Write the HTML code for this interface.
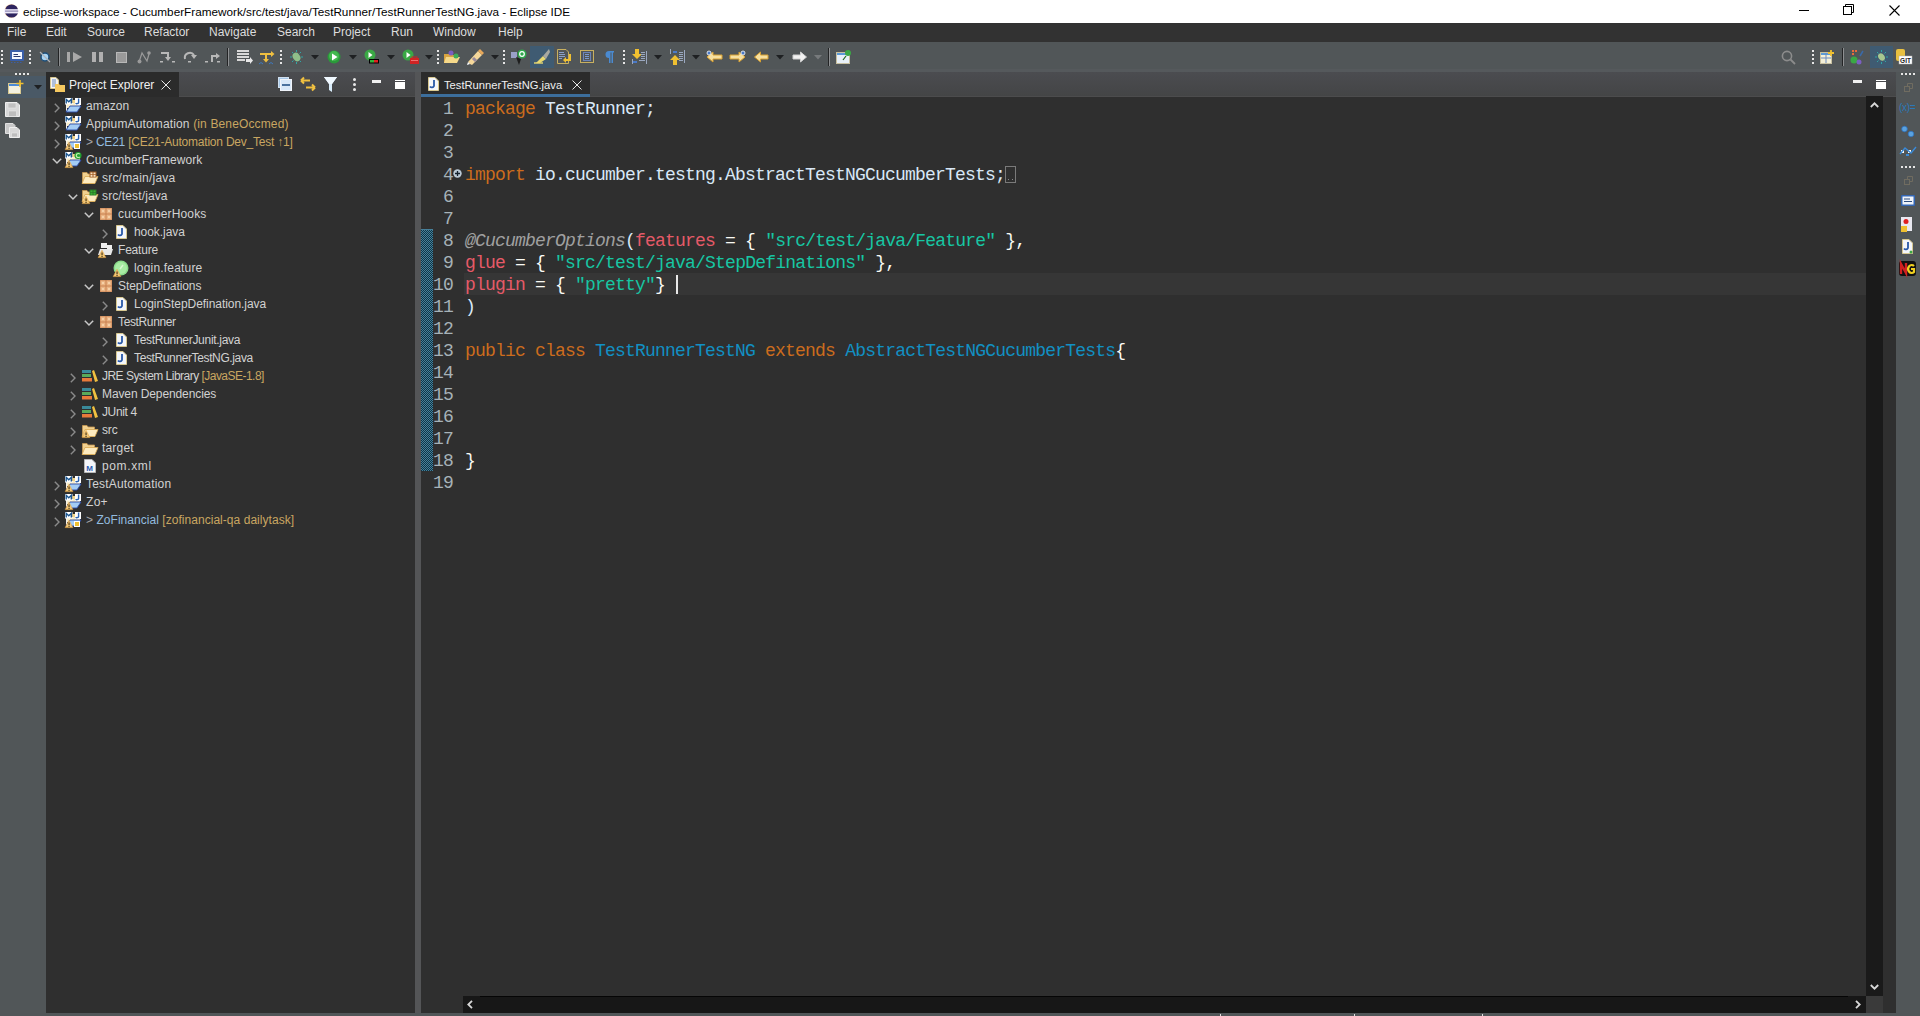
<!DOCTYPE html><html><head><meta charset="utf-8"><style>
*{margin:0;padding:0;box-sizing:border-box}
html,body{width:1920px;height:1016px;overflow:hidden;background:#515658;font-family:"Liberation Sans",sans-serif}
.a{position:absolute}
svg{position:absolute;overflow:visible}
.t{position:absolute;white-space:nowrap;font-size:12px;line-height:18px;height:18px}
.m{position:absolute;white-space:nowrap;font-size:12px;line-height:20px;color:#dddddd}
.c{position:absolute;white-space:pre;font-family:"Liberation Mono",monospace;font-size:18px;letter-spacing:-0.8px;line-height:22px;height:22px;color:#d9e8f7}
.ln{position:absolute;white-space:pre;font-family:"Liberation Mono",monospace;font-size:18px;letter-spacing:-0.8px;line-height:22px;height:22px;color:#a6b2b8;text-align:right;width:40px}
.kw{color:#cc6c1d}.st{color:#17c6a3}.an{color:#a0a0a0;font-style:italic}.at{color:#e65a68}.cl{color:#1290c3}.op{color:#f9faf4}
.dec{color:#c9a661}.repo{color:#93bbdf}
</style></head><body>
<div class="a" style="left:0;top:0;width:1920px;height:23px;background:#fff"></div>
<svg style="left:4px;top:4px" width="14" height="14" viewBox="0 0 14 14"><circle cx="7.3" cy="7" r="6.8" fill="#f4b060" opacity="0.7"/><circle cx="7.6" cy="7" r="6.6" fill="#2e2560"/><rect x="0" y="5.2" width="14" height="4.2" fill="#f4f0ff"/><rect x="1" y="6.3" width="13" height="1.8" fill="#a8a2c4"/></svg>
<div class="a" style="left:23px;top:4px;font-size:11.74px;line-height:16px;color:#000;white-space:nowrap">eclipse-workspace - CucumberFramework/src/test/java/TestRunner/TestRunnerTestNG.java - Eclipse IDE</div>
<div class="a" style="left:1799px;top:10px;width:10px;height:1px;background:#000"></div>
<svg style="left:1843px;top:4px" width="12" height="12" viewBox="0 0 12 12"><rect x="0.5" y="2.5" width="8" height="8" fill="none" stroke="#000"/><path d="M2.5 2.5V0.5H10.5V8.5H8.5" fill="none" stroke="#000"/></svg>
<svg style="left:1889px;top:5px" width="11" height="11" viewBox="0 0 11 11"><path d="M0.5 0.5L10.5 10.5M10.5 0.5L0.5 10.5" stroke="#000" stroke-width="1.1"/></svg>
<div class="a" style="left:0;top:23px;width:1920px;height:19px;background:#323232"></div>
<div class="m" style="left:7px;top:22px">File</div>
<div class="m" style="left:46px;top:22px">Edit</div>
<div class="m" style="left:87px;top:22px">Source</div>
<div class="m" style="left:144px;top:22px">Refactor</div>
<div class="m" style="left:209px;top:22px">Navigate</div>
<div class="m" style="left:277px;top:22px">Search</div>
<div class="m" style="left:333px;top:22px">Project</div>
<div class="m" style="left:391px;top:22px">Run</div>
<div class="m" style="left:433px;top:22px">Window</div>
<div class="m" style="left:498px;top:22px">Help</div>
<div class="a" style="left:0;top:42px;width:1920px;height:30px;background:#515658"></div>
<div class="a" style="left:1px;top:50px;width:2px;height:2px;background:#e6e6e6"></div><div class="a" style="left:1px;top:54px;width:2px;height:2px;background:#e6e6e6"></div><div class="a" style="left:1px;top:58px;width:2px;height:2px;background:#e6e6e6"></div><div class="a" style="left:1px;top:62px;width:2px;height:2px;background:#e6e6e6"></div>
<svg style="left:10px;top:50px" width="14" height="14" viewBox="0 0 14 14"><rect x="0" y="0" width="14" height="11" rx="1" fill="#3a5fa8"/><rect x="2" y="2" width="10" height="7" fill="#f4f8ff"/><rect x="3.5" y="4" width="4.5" height="1" fill="#2a3a70"/><rect x="3.5" y="6" width="7" height="1" fill="#2a3a70"/><path d="M1 12.5H13" stroke="#3a5fa8" stroke-dasharray="1.5 1.5"/></svg>
<div class="a" style="left:29px;top:50px;width:2px;height:2px;background:#e6e6e6"></div><div class="a" style="left:29px;top:54px;width:2px;height:2px;background:#e6e6e6"></div><div class="a" style="left:29px;top:58px;width:2px;height:2px;background:#e6e6e6"></div><div class="a" style="left:29px;top:62px;width:2px;height:2px;background:#e6e6e6"></div>
<svg style="left:39px;top:51px" width="12" height="12" viewBox="0 0 12 12"><circle cx="6" cy="6" r="4" fill="#a8d4f4" stroke="#1d4e78" stroke-width="1.5"/><path d="M1 1L11 11" stroke="#b0b4b8" stroke-width="1.2"/></svg>
<div class="a" style="left:58px;top:48px;width:1px;height:18px;background:#232425"></div><div class="a" style="left:59px;top:48px;width:1px;height:18px;background:#8e9092"></div>
<svg style="left:67px;top:52px" width="16" height="10" viewBox="0 0 16 10"><rect x="0" y="0" width="3" height="10" fill="#a8a8a8"/><path d="M6 0L15 5L6 10Z" fill="#a8a8a8"/></svg>
<svg style="left:92px;top:52px" width="12" height="10" viewBox="0 0 12 10"><rect x="0" y="0" width="4" height="10" fill="#b0b0b0"/><rect x="7" y="0" width="4" height="10" fill="#b0b0b0"/></svg>
<svg style="left:116px;top:52px" width="11" height="11" viewBox="0 0 11 11"><rect x="0.5" y="0.5" width="10" height="10" fill="#9a9a9a" stroke="#b8b8b8"/></svg>
<svg style="left:137px;top:51px" width="14" height="13" viewBox="0 0 14 13"><path d="M2 11L5 2L10 10L12 3" fill="none" stroke="#9a9a9a" stroke-width="1.2"/><circle cx="2.5" cy="10.5" r="2" fill="#9a9a9a"/><circle cx="12" cy="2" r="1.8" fill="#9a9a9a"/></svg>
<svg style="left:160px;top:51px" width="15" height="12" viewBox="0 0 15 12"><path d="M1 2H8V8" fill="none" stroke="#b8b8b8" stroke-width="2"/><path d="M5 6H11L8 10Z" fill="#b8b8b8"/><rect x="0" y="10" width="3" height="1.5" fill="#b8b8b8"/><rect x="12" y="10" width="3" height="1.5" fill="#b8b8b8"/></svg>
<svg style="left:183px;top:51px" width="15" height="12" viewBox="0 0 15 12"><path d="M2 8A5 5 0 0 1 11 4" fill="none" stroke="#b8b8b8" stroke-width="2"/><path d="M8 4H14L11 8Z" fill="#b8b8b8"/><rect x="5" y="10" width="3" height="1.5" fill="#b8b8b8"/></svg>
<svg style="left:205px;top:51px" width="16" height="12" viewBox="0 0 16 12"><path d="M7 11V5H12" fill="none" stroke="#b8b8b8" stroke-width="2"/><path d="M11 2L15 5L11 8Z" fill="#b8b8b8"/><rect x="0" y="10" width="3" height="1.5" fill="#b8b8b8"/><rect x="12" y="10" width="3" height="1.5" fill="#b8b8b8"/></svg>
<div class="a" style="left:227px;top:48px;width:1px;height:18px;background:#232425"></div><div class="a" style="left:228px;top:48px;width:1px;height:18px;background:#8e9092"></div>
<svg style="left:237px;top:50px" width="16" height="14" viewBox="0 0 16 14"><rect x="0" y="0" width="12" height="2" fill="#d8d8d8"/><rect x="0" y="3" width="12" height="2" fill="#d8d8d8"/><rect x="0" y="6" width="12" height="2" fill="#d8d8d8"/><rect x="0" y="9" width="8" height="2" fill="#d8d8d8"/><path d="M9 9H13V7L16 10.5L13 14V12H9Z" fill="#e8e8e8"/></svg>
<svg style="left:259px;top:50px" width="16" height="14" viewBox="0 0 16 14"><path d="M1 4H13" stroke="#f0c040" stroke-width="2"/><path d="M12 1L15.5 4L12 7Z" fill="#f0c040"/><path d="M7 4V10" stroke="#f0c040" stroke-width="2"/><path d="M4 9H10L7 12.5Z" fill="#f0c040"/><path d="M0 14L2 12.5L4 14M10 14L12 12.5L14 14" stroke="#3d7ac0" fill="none"/></svg>
<div class="a" style="left:280px;top:50px;width:2px;height:2px;background:#e6e6e6"></div><div class="a" style="left:280px;top:54px;width:2px;height:2px;background:#e6e6e6"></div><div class="a" style="left:280px;top:58px;width:2px;height:2px;background:#e6e6e6"></div><div class="a" style="left:280px;top:62px;width:2px;height:2px;background:#e6e6e6"></div>
<svg style="left:289px;top:50px" width="15" height="14" viewBox="0 0 15 14"><ellipse cx="7.5" cy="7" rx="3.5" ry="4.5" fill="#8fbf8a" transform="rotate(-35 7.5 7)"/><path d="M1 7H3M12 7H14M7.5 0V2M7.5 12V14M3 2L4.5 3.5M12 2L10.5 3.5M3 12L4.5 10.5M12 12L10.5 10.5" stroke="#2fa6a6" stroke-width="1"/></svg>
<svg style="left:311px;top:55px" width="8" height="5" viewBox="0 0 8 5"><path d="M0 0H8L4 4.5Z" fill="#1e2022"/></svg>
<svg style="left:327px;top:50px" width="14" height="14" viewBox="0 0 14 14"><circle cx="7" cy="7" r="6.5" fill="#2a9a3a"/><circle cx="7" cy="6" r="5" fill="#44b84f"/><path d="M5 3.5L10.5 7L5 10.5Z" fill="#fff"/></svg>
<svg style="left:349px;top:55px" width="8" height="5" viewBox="0 0 8 5"><path d="M0 0H8L4 4.5Z" fill="#1e2022"/></svg>
<svg style="left:364px;top:49px" width="16" height="15" viewBox="0 0 16 15"><circle cx="6" cy="6" r="5.5" fill="#3aa845"/><path d="M4.5 3L8.5 6L4.5 9Z" fill="#fff"/><rect x="5" y="10" width="10" height="4.5" fill="#000"/><rect x="6" y="11" width="4" height="2.5" fill="#2fb43a"/><rect x="10" y="11" width="4" height="2.5" fill="#e02020"/></svg>
<svg style="left:387px;top:55px" width="8" height="5" viewBox="0 0 8 5"><path d="M0 0H8L4 4.5Z" fill="#1e2022"/></svg>
<svg style="left:402px;top:49px" width="17" height="15" viewBox="0 0 17 15"><circle cx="6" cy="6" r="5.5" fill="#3aa845"/><path d="M4.5 3L8.5 6L4.5 9Z" fill="#fff"/><rect x="8" y="9" width="9" height="6" fill="#d02424"/><rect x="10" y="8" width="5" height="2" fill="none" stroke="#d02424"/><rect x="9" y="11" width="7" height="1" fill="#f07070"/></svg>
<svg style="left:425px;top:55px" width="8" height="5" viewBox="0 0 8 5"><path d="M0 0H8L4 4.5Z" fill="#1e2022"/></svg>
<div class="a" style="left:437px;top:50px;width:2px;height:2px;background:#e6e6e6"></div><div class="a" style="left:437px;top:54px;width:2px;height:2px;background:#e6e6e6"></div><div class="a" style="left:437px;top:58px;width:2px;height:2px;background:#e6e6e6"></div><div class="a" style="left:437px;top:62px;width:2px;height:2px;background:#e6e6e6"></div>
<svg style="left:444px;top:50px" width="17" height="14" viewBox="0 0 17 14"><path d="M0 4H5L6 5H13V13H0Z" fill="#d9a441"/><path d="M2 7H16L13 13H0Z" fill="#f5d98a"/><circle cx="7" cy="3" r="2.5" fill="#7b5fc0"/><circle cx="12" cy="6" r="2.5" fill="#3fae5a"/></svg>
<svg style="left:467px;top:49px" width="17" height="16" viewBox="0 0 17 16"><path d="M3 15L1 13L11 2L15 6L5 16Z" fill="#f5d79a"/><path d="M11 2L13 0L17 4L15 6Z" fill="#e8a85a"/><path d="M6 9L9 12" stroke="#9a8a9a" stroke-width="3"/><path d="M1 13L0 16L3 15Z" fill="#fff"/></svg>
<svg style="left:491px;top:55px" width="8" height="5" viewBox="0 0 8 5"><path d="M0 0H8L4 4.5Z" fill="#1e2022"/></svg>
<div class="a" style="left:503px;top:50px;width:2px;height:2px;background:#e6e6e6"></div><div class="a" style="left:503px;top:54px;width:2px;height:2px;background:#e6e6e6"></div><div class="a" style="left:503px;top:58px;width:2px;height:2px;background:#e6e6e6"></div><div class="a" style="left:503px;top:62px;width:2px;height:2px;background:#e6e6e6"></div>
<svg style="left:511px;top:49px" width="16" height="16" viewBox="0 0 16 16"><rect x="0" y="3" width="6" height="6" fill="#9aa0c8"/><path d="M5 8L8 16L10 10Z" fill="#1e1e1e"/><circle cx="11" cy="5" r="4.5" fill="#2ea84a"/><circle cx="11" cy="5" r="2.3" fill="none" stroke="#fff" stroke-width="1.2"/></svg>
<div class="a" style="left:530px;top:46px;width:24px;height:22px;background:#3f5b72"></div>
<svg style="left:534px;top:49px" width="16" height="15" viewBox="0 0 16 15"><path d="M2 14L9 7L12 10L6 14Z" fill="#e8d870"/><path d="M9 7L15 0L16 3L12 10Z" fill="#a8a8a0"/><path d="M0 14H9" stroke="#e8d870" stroke-width="1.4"/></svg>
<svg style="left:557px;top:49px" width="15" height="15" viewBox="0 0 15 15"><path d="M0.5 0.5H9L11.5 3V14.5H0.5Z" fill="none" stroke="#c8b060"/><path d="M2 3.5H7M2 5.5H8M2 7.5H8M2 9.5H5" stroke="#8aa0c8"/><path d="M13 5V11H8" fill="none" stroke="#f0c030" stroke-width="2"/><path d="M9 8V14L6 11Z" fill="#f0c030"/></svg>
<svg style="left:580px;top:50px" width="14" height="13" viewBox="0 0 14 13"><rect x="0.5" y="0.5" width="13" height="12" fill="none" stroke="#c8b060"/><rect x="3.5" y="2.5" width="7" height="8" fill="none" stroke="#6c84b8"/><path d="M5 4.5H9M5 6.5H9M5 8.5H9" stroke="#7a9ad0"/></svg>
<svg style="left:605px;top:51px" width="9" height="12" viewBox="0 0 9 12"><path d="M4 0H9V1.5H8V12H6.5V1.5H5.5V12H4V7A3.5 3.5 0 0 1 4 0Z" fill="#4a8ad0"/></svg>
<div class="a" style="left:623px;top:50px;width:2px;height:2px;background:#e6e6e6"></div><div class="a" style="left:623px;top:54px;width:2px;height:2px;background:#e6e6e6"></div><div class="a" style="left:623px;top:58px;width:2px;height:2px;background:#e6e6e6"></div><div class="a" style="left:623px;top:62px;width:2px;height:2px;background:#e6e6e6"></div>
<svg style="left:632px;top:49px" width="15" height="16" viewBox="0 0 15 16"><path d="M3 0H7V5H10L5 10L0 5H3Z" fill="#f0c030"/><path d="M9 3.5H13M9 5.5H13M9 7.5H13M9 9.5H13M7 11.5H13" stroke="#9aa8c0"/><path d="M14.5 2V15" stroke="#9aa8c0"/><rect x="1" y="12" width="4" height="2" fill="#4a7ac8"/><path d="M0.5 10V15" stroke="#9aa8c0"/></svg>
<svg style="left:654px;top:55px" width="8" height="5" viewBox="0 0 8 5"><path d="M0 0H8L4 4.5Z" fill="#1e2022"/></svg>
<svg style="left:670px;top:49px" width="15" height="16" viewBox="0 0 15 16"><path d="M3 16H7V11H10L5 6L0 11H3Z" fill="#f0c030"/><path d="M9 3.5H13M9 5.5H13M9 7.5H13M9 9.5H13M9 11.5H13" stroke="#9aa8c0"/><path d="M14.5 1V14" stroke="#9aa8c0"/><rect x="3" y="2" width="4" height="2" fill="#4a7ac8"/><path d="M0.5 0V5" stroke="#9aa8c0"/></svg>
<svg style="left:692px;top:55px" width="8" height="5" viewBox="0 0 8 5"><path d="M0 0H8L4 4.5Z" fill="#1e2022"/></svg>
<svg style="left:706px;top:50px" width="17" height="13" viewBox="0 0 17 13"><path d="M1 7L7 2V5H16V9H7V12Z" fill="#f7e0a0" stroke="#d8a030"/><circle cx="3" cy="3" r="2" fill="#4a7ac8" stroke="#fff" stroke-width="0.8"/></svg>
<svg style="left:729px;top:50px" width="17" height="13" viewBox="0 0 17 13"><path d="M16 7L10 2V5H1V9H10V12Z" fill="#f7e0a0" stroke="#d8a030"/><circle cx="14" cy="3" r="2" fill="#4a7ac8" stroke="#fff" stroke-width="0.8"/></svg>
<svg style="left:754px;top:51px" width="15" height="12" viewBox="0 0 15 12"><path d="M0.5 6L6.5 1V4H14V8H6.5V11Z" fill="#f7e0a0" stroke="#d8a030"/></svg>
<svg style="left:776px;top:55px" width="8" height="5" viewBox="0 0 8 5"><path d="M0 0H8L4 4.5Z" fill="#1e2022"/></svg>
<svg style="left:792px;top:51px" width="15" height="12" viewBox="0 0 15 12"><path d="M14.5 6L8.5 1V4H1V8H8.5V11Z" fill="#f2f2f2" stroke="#d0d0d0"/></svg>
<svg style="left:814px;top:55px" width="8" height="5" viewBox="0 0 8 5"><path d="M0 0H8L4 4.5Z" fill="#777a7c"/></svg>
<div class="a" style="left:828px;top:48px;width:1px;height:18px;background:#232425"></div><div class="a" style="left:829px;top:48px;width:1px;height:18px;background:#8e9092"></div>
<svg style="left:836px;top:50px" width="16" height="14" viewBox="0 0 16 14"><rect x="0.5" y="2.5" width="13" height="11" fill="#e8f0f8" stroke="#c8c0a0"/><rect x="1" y="3" width="12" height="2" fill="#5a9ad8"/><path d="M7 10L10 6" stroke="#1e6a1e" stroke-width="1.2"/><circle cx="12" cy="3" r="3" fill="#3aa845"/></svg>
<svg style="left:1781px;top:50px" width="15" height="15" viewBox="0 0 15 15"><circle cx="6" cy="6" r="4.6" fill="none" stroke="#8c8c8c" stroke-width="1.6"/><path d="M9.5 9.5L14 14" stroke="#8c8c8c" stroke-width="1.8"/></svg>
<div class="a" style="left:1812px;top:50px;width:2px;height:2px;background:#e6e6e6"></div><div class="a" style="left:1812px;top:54px;width:2px;height:2px;background:#e6e6e6"></div><div class="a" style="left:1812px;top:58px;width:2px;height:2px;background:#e6e6e6"></div><div class="a" style="left:1812px;top:62px;width:2px;height:2px;background:#e6e6e6"></div>
<svg style="left:1820px;top:50px" width="15" height="14" viewBox="0 0 15 14"><rect x="0.5" y="2.5" width="11" height="11" fill="#f4f0d8" stroke="#c8c0a0"/><rect x="1" y="3" width="10" height="2" fill="#5a9ad8"/><path d="M6 3V13M1 8H11" stroke="#6a8ac0"/><path d="M11 0V6M8 3H14" stroke="#f0c030" stroke-width="1.8"/></svg>
<div class="a" style="left:1842px;top:48px;width:1px;height:18px;background:#232425"></div><div class="a" style="left:1843px;top:48px;width:1px;height:18px;background:#8e9092"></div>
<svg style="left:1850px;top:50px" width="15" height="15" viewBox="0 0 15 15"><rect x="2" y="0" width="2" height="2" fill="#e86a3a"/><rect x="5" y="0" width="2" height="2" fill="#e86a3a"/><rect x="2" y="3" width="2" height="2" fill="#e86a3a"/><circle cx="4" cy="10" r="3.5" fill="#3aa845"/><circle cx="9" cy="12" r="2.5" fill="#7b5fc0"/><path d="M10 6L13 1" stroke="#3a6aa8" stroke-width="1.5"/></svg>
<div class="a" style="left:1870px;top:46px;width:23px;height:22px;background:#3f5b72"></div>
<svg style="left:1874px;top:50px" width="15" height="14" viewBox="0 0 15 14"><ellipse cx="7.5" cy="7" rx="3" ry="4" fill="#a8c890" transform="rotate(-35 7.5 7)"/><path d="M1 7H3M12 7H14M7.5 0V2M7.5 12V14M3 2L4.5 3.5M12 2L10.5 3.5M3 12L4.5 10.5M12 12L10.5 10.5" stroke="#2fa6a6" stroke-width="1"/></svg>
<svg style="left:1896px;top:49px" width="16" height="16" viewBox="0 0 16 16"><rect x="0" y="0" width="9" height="12" rx="2" fill="#e8c040"/><rect x="3" y="7" width="13" height="8" fill="#fff" stroke="#b0b0b0" stroke-width="0.5"/><text x="9.5" y="13.5" font-size="6.5" font-family="Liberation Sans" font-weight="bold" text-anchor="middle" fill="#222">GIT</text></svg>
<div class="a" style="left:0;top:72px;width:46px;height:944px;background:#515658"></div>
<div class="a" style="left:0;top:76px;width:46px;height:22px;background:#4a5966"></div>
<div class="a" style="left:15px;top:73px;width:2px;height:2px;background:#e6e6e6"></div><div class="a" style="left:19px;top:73px;width:2px;height:2px;background:#e6e6e6"></div><div class="a" style="left:23px;top:73px;width:2px;height:2px;background:#e6e6e6"></div><div class="a" style="left:27px;top:73px;width:2px;height:2px;background:#e6e6e6"></div>
<svg style="left:8px;top:80px" width="16" height="14" viewBox="0 0 16 14"><rect x="0.5" y="3.5" width="12" height="10" fill="#f2f0e0" stroke="#d8c890"/><rect x="1" y="4" width="11" height="2" fill="#4a8ad8"/><path d="M12 0V7M8.5 3.5H15.5" stroke="#f0c030" stroke-width="1.6"/></svg>
<svg style="left:34px;top:85px" width="8" height="5" viewBox="0 0 8 5"><path d="M0 0H8L4 4.5Z" fill="#1e2022"/></svg>
<svg style="left:5px;top:102px" width="15" height="15" viewBox="0 0 15 15"><path d="M0.5 0.5H12L14.5 3V14.5H0.5Z" fill="#d8d8d8" stroke="#eeeeee"/><rect x="3" y="1" width="8" height="5" fill="#c0c0c0" stroke="#e8e8e8" stroke-width="0.6"/><rect x="3.5" y="9" width="8" height="5.5" fill="#bdbdbd" stroke="#e8e8e8" stroke-width="0.6"/></svg>
<svg style="left:5px;top:123px" width="15" height="15" viewBox="0 0 15 15"><path d="M0.5 0.5H8L10 2.5V10.5H0.5Z" fill="#c8c8c8" stroke="#e0e0e0"/><path d="M4.5 4.5H12L14.5 7V14.5H4.5Z" fill="#d8d8d8" stroke="#eeeeee"/><rect x="6.5" y="10" width="6" height="4" fill="#bdbdbd" stroke="#e8e8e8" stroke-width="0.6"/></svg>
<div class="a" style="left:46px;top:72px;width:369px;height:941px;background:#2f2f2f"></div>
<div class="a" style="left:179px;top:72px;width:236px;height:24px;background:linear-gradient(#4b4c50,#444546)"></div><div class="a" style="left:179px;top:96px;width:236px;height:1px;background:#4c4c4d"></div>
<div class="a" style="left:46px;top:72px;width:133px;height:25px;background:#2b2b2b"></div>
<svg style="left:50px;top:77px" width="15" height="15" viewBox="0 0 15 15"><path d="M0.5 0.5H6L8.5 3V11.5H0.5Z" fill="#f4f4f4" stroke="#d8c890"/><path d="M2 3H6M2 5H6M2 7H6M2 9H5" stroke="#6a8ac0"/><path d="M5 7H9L10 8H15V15H5Z" fill="#f5c860"/></svg>
<div class="t" style="left:69px;top:76px;color:#f0f0f0">Project Explorer</div>
<svg style="left:161px;top:80px" width="10" height="10" viewBox="0 0 10 10"><path d="M0.5 0.5L9.5 9.5M9.5 0.5L0.5 9.5" stroke="#e8e8e8" stroke-width="1"/></svg>
<svg style="left:278px;top:77px" width="14" height="14" viewBox="0 0 14 14"><rect x="0.5" y="0.5" width="10" height="10" fill="#a8c8e8" stroke="#d0e0f0"/><rect x="2.5" y="2.5" width="11" height="11" fill="#d8e8f8" stroke="#f0f4fa"/><path d="M4 8H12" stroke="#1a4a80" stroke-width="1.5"/></svg>
<svg style="left:300px;top:76px" width="16" height="16" viewBox="0 0 16 16"><path d="M1 4.5H10M1 4.5L4 1.5M1 4.5L4 7.5" stroke="#f0c040" stroke-width="2" fill="none"/><path d="M15 11.5H6M15 11.5L12 8.5M15 11.5L12 14.5" stroke="#f0c040" stroke-width="2" fill="none"/></svg>
<svg style="left:324px;top:77px" width="13" height="15" viewBox="0 0 13 15"><path d="M0 0H13L8 7V15L5 13V7Z" fill="#d8ecfa"/><path d="M0 0H13L8 7H5Z" fill="#f0f8ff"/></svg>
<div class="a" style="left:353px;top:78px;width:3px;height:3px;border-radius:2px;background:#e8e8e8"></div><div class="a" style="left:353px;top:83px;width:3px;height:3px;border-radius:2px;background:#e8e8e8"></div><div class="a" style="left:353px;top:88px;width:3px;height:3px;border-radius:2px;background:#e8e8e8"></div>
<div class="a" style="left:372px;top:80px;width:9px;height:3px;background:#f0f0f0"></div>
<div class="a" style="left:395px;top:80px;width:10px;height:1px;background:#fff"></div><div class="a" style="left:395px;top:82px;width:10px;height:7px;background:#fff"></div>
<svg style="left:54px;top:103px" width="6" height="10" viewBox="0 0 6 10"><path d="M0.8 0.8L5 5L0.8 9.2" fill="none" stroke="#8a8a8a" stroke-width="1.4"/></svg>
<svg style="left:65px;top:98px" width="17" height="15" viewBox="0 0 17 15"><path d="M1 5H15V10H1Z" fill="#f8ecc8"/><path d="M1.5 5V13" stroke="#f4f0e8"/><path d="M1 14L5 8H16L12 14Z" fill="#a4ccf4" stroke="#2c4ca8" stroke-width="0.9"/><rect x="0" y="0" width="7.5" height="6.5" fill="#fff"/><path d="M1.2 5.6V1.3L3.75 3.8L6.3 1.3V5.6" fill="none" stroke="#1a5590" stroke-width="1.4"/><rect x="7.5" y="2" width="2.5" height="3" fill="#f0d488"/><rect x="10" y="0" width="6" height="7" fill="#fff"/><path d="M13.6 0.5V4.6A1.9 1.9 0 0 1 10.6 5.2" fill="none" stroke="#2a62b0" stroke-width="1.4"/></svg>
<div class="t" style="left:86px;top:97px;color:#d2d2d2;letter-spacing:0.120px">amazon</div>
<svg style="left:54px;top:121px" width="6" height="10" viewBox="0 0 6 10"><path d="M0.8 0.8L5 5L0.8 9.2" fill="none" stroke="#8a8a8a" stroke-width="1.4"/></svg>
<svg style="left:65px;top:116px" width="17" height="15" viewBox="0 0 17 15"><path d="M1 5H15V10H1Z" fill="#f8ecc8"/><path d="M1.5 5V13" stroke="#f4f0e8"/><path d="M1 14L5 8H16L12 14Z" fill="#a4ccf4" stroke="#2c4ca8" stroke-width="0.9"/><rect x="0" y="0" width="7.5" height="6.5" fill="#fff"/><path d="M1.2 5.6V1.3L3.75 3.8L6.3 1.3V5.6" fill="none" stroke="#1a5590" stroke-width="1.4"/><rect x="7.5" y="2" width="2.5" height="3" fill="#f0d488"/><rect x="10" y="0" width="6" height="7" fill="#fff"/><path d="M13.6 0.5V4.6A1.9 1.9 0 0 1 10.6 5.2" fill="none" stroke="#2a62b0" stroke-width="1.4"/></svg>
<div class="t" style="left:86px;top:115px;color:#d2d2d2;letter-spacing:0.142px">AppiumAutomation <span class="dec">(in BeneOccmed)</span></div>
<svg style="left:54px;top:139px" width="6" height="10" viewBox="0 0 6 10"><path d="M0.8 0.8L5 5L0.8 9.2" fill="none" stroke="#8a8a8a" stroke-width="1.4"/></svg>
<svg style="left:65px;top:134px" width="17" height="15" viewBox="0 0 17 15"><path d="M1 5H15V10H1Z" fill="#f8ecc8"/><path d="M1.5 5V13" stroke="#f4f0e8"/><path d="M1 14L5 8H16L12 14Z" fill="#a4ccf4" stroke="#2c4ca8" stroke-width="0.9"/><rect x="0" y="0" width="7.5" height="6.5" fill="#fff"/><path d="M1.2 5.6V1.3L3.75 3.8L6.3 1.3V5.6" fill="none" stroke="#1a5590" stroke-width="1.4"/><rect x="7.5" y="2" width="2.5" height="3" fill="#f0d488"/><rect x="10" y="0" width="6" height="7" fill="#fff"/><path d="M13.6 0.5V4.6A1.9 1.9 0 0 1 10.6 5.2" fill="none" stroke="#2a62b0" stroke-width="1.4"/></svg><svg style="left:65px;top:142px" width="8" height="8" viewBox="0 0 8 8"><path d="M4 0.3L7.8 7.6H0.2Z" fill="#f2c878" stroke="#e0a040" stroke-width="0.6"/><rect x="3.5" y="2.5" width="1.1" height="2.8" fill="#3a2a10"/><rect x="3.5" y="6" width="1.1" height="1" fill="#3a2a10"/></svg><div class="a" style="left:74px;top:143px;width:6px;height:6px;background:#f0c030;border:1px solid #fff"></div>
<div class="t" style="left:86px;top:133px;color:#d2d2d2;letter-spacing:-0.217px"><span style="color:#a8a8a8">&gt; </span><span class="repo">CE21</span> <span class="dec">[CE21-Automation Dev_Test ↑1]</span></div>
<svg style="left:52px;top:158px" width="10" height="6" viewBox="0 0 10 6"><path d="M0.8 0.8L5 5L9.2 0.8" fill="none" stroke="#c8c8c8" stroke-width="1.5"/></svg>
<svg style="left:65px;top:152px" width="17" height="15" viewBox="0 0 17 15"><path d="M1 5H15V10H1Z" fill="#f8ecc8"/><path d="M1.5 5V13" stroke="#f4f0e8"/><path d="M1 14L5 8H16L12 14Z" fill="#a4ccf4" stroke="#2c4ca8" stroke-width="0.9"/><rect x="0" y="0" width="7.5" height="6.5" fill="#fff"/><path d="M1.2 5.6V1.3L3.75 3.8L6.3 1.3V5.6" fill="none" stroke="#1a5590" stroke-width="1.4"/><rect x="7.5" y="2" width="2.5" height="3" fill="#f0d488"/><circle cx="13" cy="3.5" r="3.5" fill="#22a030"/><path d="M14.8 2.2A2 2 0 1 0 14.8 4.8" fill="none" stroke="#bff0b0" stroke-width="1.2"/></svg><svg style="left:65px;top:160px" width="8" height="8" viewBox="0 0 8 8"><path d="M4 0.3L7.8 7.6H0.2Z" fill="#f2c878" stroke="#e0a040" stroke-width="0.6"/><rect x="3.5" y="2.5" width="1.1" height="2.8" fill="#3a2a10"/><rect x="3.5" y="6" width="1.1" height="1" fill="#3a2a10"/></svg>
<div class="t" style="left:86px;top:151px;color:#d2d2d2;letter-spacing:0.056px">CucumberFramework</div>
<svg style="left:82px;top:171px" width="16" height="13" viewBox="0 0 16 13"><path d="M0.5 1.5H5L6 3H12.5V12.5H0.5Z" fill="#f0d090" stroke="#c89850" stroke-width="0.8"/><path d="M3 5.5H16L13 12.5H0Z" fill="#fdebc0" stroke="#d8a850" stroke-width="0.8"/><rect x="7.5" y="0.5" width="7" height="6" fill="#a05a20"/><rect x="8.5" y="1.5" width="2" height="1.8" fill="#f8e0c0"/><rect x="11.5" y="1.5" width="2" height="1.8" fill="#f8e0c0"/><rect x="8.5" y="4" width="2" height="1.8" fill="#f8e0c0"/><rect x="11.5" y="4" width="2" height="1.8" fill="#f8e0c0"/></svg>
<div class="t" style="left:102px;top:169px;color:#d2d2d2;letter-spacing:0.208px">src/main/java</div>
<svg style="left:68px;top:194px" width="10" height="6" viewBox="0 0 10 6"><path d="M0.8 0.8L5 5L9.2 0.8" fill="none" stroke="#c8c8c8" stroke-width="1.5"/></svg>
<svg style="left:82px;top:189px" width="16" height="13" viewBox="0 0 16 13"><path d="M0.5 1.5H5L6 3H12.5V12.5H0.5Z" fill="#f0d090" stroke="#c89850" stroke-width="0.8"/><path d="M3 5.5H16L13 12.5H0Z" fill="#fdebc0" stroke="#d8a850" stroke-width="0.8"/><rect x="7.5" y="0.5" width="7" height="6" fill="#2a7a2a"/><rect x="8.5" y="1.5" width="2" height="1.8" fill="#38b030"/><rect x="11.5" y="1.5" width="2" height="1.8" fill="#38b030"/><rect x="8.5" y="4" width="2" height="1.8" fill="#38b030"/><rect x="11.5" y="4" width="2" height="1.8" fill="#38b030"/></svg><svg style="left:82px;top:196px" width="8" height="8" viewBox="0 0 8 8"><path d="M4 0.3L7.8 7.6H0.2Z" fill="#f2c878" stroke="#e0a040" stroke-width="0.6"/><rect x="3.5" y="2.5" width="1.1" height="2.8" fill="#3a2a10"/><rect x="3.5" y="6" width="1.1" height="1" fill="#3a2a10"/></svg>
<div class="t" style="left:102px;top:187px;color:#d2d2d2;letter-spacing:0.125px">src/test/java</div>
<svg style="left:84px;top:212px" width="10" height="6" viewBox="0 0 10 6"><path d="M0.8 0.8L5 5L9.2 0.8" fill="none" stroke="#c8c8c8" stroke-width="1.5"/></svg>
<svg style="left:100px;top:208px" width="12" height="12" viewBox="0 0 12 12"><rect x="0" y="0" width="12" height="12" fill="#c88050"/><rect x="0.5" y="0.5" width="5" height="5" fill="#eab484"/><rect x="6.5" y="0.5" width="5" height="5" fill="#eab484"/><rect x="0.5" y="6.5" width="5" height="5" fill="#eab484"/><rect x="6.5" y="6.5" width="5" height="5" fill="#eab484"/><rect x="2" y="2" width="2" height="2" fill="#f6d0a8"/><rect x="8" y="2" width="2" height="2" fill="#f6d0a8"/><rect x="2" y="8" width="2" height="2" fill="#f6d0a8"/><rect x="8" y="8" width="2" height="2" fill="#f6d0a8"/></svg>
<div class="t" style="left:118px;top:205px;color:#d2d2d2;letter-spacing:0.133px">cucumberHooks</div>
<svg style="left:102px;top:229px" width="6" height="10" viewBox="0 0 6 10"><path d="M0.8 0.8L5 5L0.8 9.2" fill="none" stroke="#8a8a8a" stroke-width="1.4"/></svg>
<svg style="left:116px;top:225px" width="11" height="14" viewBox="0 0 11 14"><path d="M0.5 0.5H7L10.5 4V13.5H0.5Z" fill="#f4f6fa" stroke="#d8c890"/><path d="M6 3V9A2.3 2.3 0 0 1 2 9.5" fill="none" stroke="#2858a8" stroke-width="1.8"/></svg>
<div class="t" style="left:134px;top:223px;color:#d2d2d2;letter-spacing:-0.062px">hook.java</div>
<svg style="left:84px;top:248px" width="10" height="6" viewBox="0 0 10 6"><path d="M0.8 0.8L5 5L9.2 0.8" fill="none" stroke="#c8c8c8" stroke-width="1.5"/></svg>
<svg style="left:98px;top:243px" width="16" height="14" viewBox="0 0 16 14"><rect x="3" y="0" width="6" height="5" fill="#f0f0f0"/><rect x="9" y="2" width="5" height="5" fill="#f0f0f0"/><path d="M2 6H15L13 12H0Z" fill="#e8e8e8"/></svg><svg style="left:98px;top:250px" width="8" height="8" viewBox="0 0 8 8"><path d="M4 0.3L7.8 7.6H0.2Z" fill="#f2c878" stroke="#e0a040" stroke-width="0.6"/><rect x="3.5" y="2.5" width="1.1" height="2.8" fill="#3a2a10"/><rect x="3.5" y="6" width="1.1" height="1" fill="#3a2a10"/></svg>
<div class="t" style="left:118px;top:241px;color:#d2d2d2;letter-spacing:-0.200px">Feature</div>
<svg style="left:113px;top:260px" width="16" height="16" viewBox="0 0 16 16"><circle cx="8" cy="8" r="7.5" fill="#8cdc8c"/><circle cx="8" cy="8" r="6" fill="#a8eca4"/><path d="M7 9L10 5" stroke="#d8f8d0" stroke-width="1.5"/></svg><svg style="left:113px;top:269px" width="8" height="8" viewBox="0 0 8 8"><path d="M4 0.3L7.8 7.6H0.2Z" fill="#f2c878" stroke="#e0a040" stroke-width="0.6"/><rect x="3.5" y="2.5" width="1.1" height="2.8" fill="#3a2a10"/><rect x="3.5" y="6" width="1.1" height="1" fill="#3a2a10"/></svg>
<div class="t" style="left:134px;top:259px;color:#d2d2d2;letter-spacing:0.183px">login.feature</div>
<svg style="left:84px;top:284px" width="10" height="6" viewBox="0 0 10 6"><path d="M0.8 0.8L5 5L9.2 0.8" fill="none" stroke="#c8c8c8" stroke-width="1.5"/></svg>
<svg style="left:100px;top:280px" width="12" height="12" viewBox="0 0 12 12"><rect x="0" y="0" width="12" height="12" fill="#c88050"/><rect x="0.5" y="0.5" width="5" height="5" fill="#eab484"/><rect x="6.5" y="0.5" width="5" height="5" fill="#eab484"/><rect x="0.5" y="6.5" width="5" height="5" fill="#eab484"/><rect x="6.5" y="6.5" width="5" height="5" fill="#eab484"/><rect x="2" y="2" width="2" height="2" fill="#f6d0a8"/><rect x="8" y="2" width="2" height="2" fill="#f6d0a8"/><rect x="2" y="8" width="2" height="2" fill="#f6d0a8"/><rect x="8" y="8" width="2" height="2" fill="#f6d0a8"/></svg>
<div class="t" style="left:118px;top:277px;color:#d2d2d2;letter-spacing:-0.093px">StepDefinations</div>
<svg style="left:102px;top:301px" width="6" height="10" viewBox="0 0 6 10"><path d="M0.8 0.8L5 5L0.8 9.2" fill="none" stroke="#8a8a8a" stroke-width="1.4"/></svg>
<svg style="left:116px;top:297px" width="11" height="14" viewBox="0 0 11 14"><path d="M0.5 0.5H7L10.5 4V13.5H0.5Z" fill="#f4f6fa" stroke="#d8c890"/><path d="M6 3V9A2.3 2.3 0 0 1 2 9.5" fill="none" stroke="#2858a8" stroke-width="1.8"/></svg>
<div class="t" style="left:134px;top:295px;color:#d2d2d2;letter-spacing:-0.057px">LoginStepDefination.java</div>
<svg style="left:84px;top:320px" width="10" height="6" viewBox="0 0 10 6"><path d="M0.8 0.8L5 5L9.2 0.8" fill="none" stroke="#c8c8c8" stroke-width="1.5"/></svg>
<svg style="left:100px;top:316px" width="12" height="12" viewBox="0 0 12 12"><rect x="0" y="0" width="12" height="12" fill="#c88050"/><rect x="0.5" y="0.5" width="5" height="5" fill="#eab484"/><rect x="6.5" y="0.5" width="5" height="5" fill="#eab484"/><rect x="0.5" y="6.5" width="5" height="5" fill="#eab484"/><rect x="6.5" y="6.5" width="5" height="5" fill="#eab484"/><rect x="2" y="2" width="2" height="2" fill="#f6d0a8"/><rect x="8" y="2" width="2" height="2" fill="#f6d0a8"/><rect x="2" y="8" width="2" height="2" fill="#f6d0a8"/><rect x="8" y="8" width="2" height="2" fill="#f6d0a8"/></svg>
<div class="t" style="left:118px;top:313px;color:#d2d2d2;letter-spacing:-0.367px">TestRunner</div>
<svg style="left:102px;top:337px" width="6" height="10" viewBox="0 0 6 10"><path d="M0.8 0.8L5 5L0.8 9.2" fill="none" stroke="#8a8a8a" stroke-width="1.4"/></svg>
<svg style="left:116px;top:333px" width="11" height="14" viewBox="0 0 11 14"><path d="M0.5 0.5H7L10.5 4V13.5H0.5Z" fill="#f4f6fa" stroke="#d8c890"/><path d="M6 3V9A2.3 2.3 0 0 1 2 9.5" fill="none" stroke="#2858a8" stroke-width="1.8"/></svg>
<div class="t" style="left:134px;top:331px;color:#d2d2d2;letter-spacing:-0.295px">TestRunnerJunit.java</div>
<svg style="left:102px;top:355px" width="6" height="10" viewBox="0 0 6 10"><path d="M0.8 0.8L5 5L0.8 9.2" fill="none" stroke="#8a8a8a" stroke-width="1.4"/></svg>
<svg style="left:116px;top:351px" width="11" height="14" viewBox="0 0 11 14"><path d="M0.5 0.5H7L10.5 4V13.5H0.5Z" fill="#f4f6fa" stroke="#d8c890"/><path d="M6 3V9A2.3 2.3 0 0 1 2 9.5" fill="none" stroke="#2858a8" stroke-width="1.8"/></svg>
<div class="t" style="left:134px;top:349px;color:#d2d2d2;letter-spacing:-0.375px">TestRunnerTestNG.java</div>
<svg style="left:70px;top:373px" width="6" height="10" viewBox="0 0 6 10"><path d="M0.8 0.8L5 5L0.8 9.2" fill="none" stroke="#8a8a8a" stroke-width="1.4"/></svg>
<svg style="left:82px;top:370px" width="16" height="12" viewBox="0 0 16 12"><rect x="0" y="0" width="9" height="3" fill="#3a8a9a"/><rect x="0" y="4" width="9" height="3" fill="#5aaa5a"/><rect x="0" y="8" width="10" height="3.5" fill="#e87a3a"/><path d="M10 1L12 0L16 11L13 12Z" fill="#f0c040"/></svg>
<div class="t" style="left:102px;top:367px;color:#d2d2d2;letter-spacing:-0.523px">JRE System Library <span class="dec">[JavaSE-1.8]</span></div>
<svg style="left:70px;top:391px" width="6" height="10" viewBox="0 0 6 10"><path d="M0.8 0.8L5 5L0.8 9.2" fill="none" stroke="#8a8a8a" stroke-width="1.4"/></svg>
<svg style="left:82px;top:388px" width="16" height="12" viewBox="0 0 16 12"><rect x="0" y="0" width="9" height="3" fill="#3a8a9a"/><rect x="0" y="4" width="9" height="3" fill="#5aaa5a"/><rect x="0" y="8" width="10" height="3.5" fill="#e87a3a"/><path d="M10 1L12 0L16 11L13 12Z" fill="#f0c040"/></svg>
<div class="t" style="left:102px;top:385px;color:#d2d2d2;letter-spacing:-0.106px">Maven Dependencies</div>
<svg style="left:70px;top:409px" width="6" height="10" viewBox="0 0 6 10"><path d="M0.8 0.8L5 5L0.8 9.2" fill="none" stroke="#8a8a8a" stroke-width="1.4"/></svg>
<svg style="left:82px;top:406px" width="16" height="12" viewBox="0 0 16 12"><rect x="0" y="0" width="9" height="3" fill="#3a8a9a"/><rect x="0" y="4" width="9" height="3" fill="#5aaa5a"/><rect x="0" y="8" width="10" height="3.5" fill="#e87a3a"/><path d="M10 1L12 0L16 11L13 12Z" fill="#f0c040"/></svg>
<div class="t" style="left:102px;top:403px;color:#d2d2d2;letter-spacing:-0.383px">JUnit 4</div>
<svg style="left:70px;top:427px" width="6" height="10" viewBox="0 0 6 10"><path d="M0.8 0.8L5 5L0.8 9.2" fill="none" stroke="#8a8a8a" stroke-width="1.4"/></svg>
<svg style="left:82px;top:424px" width="16" height="13" viewBox="0 0 16 13"><path d="M0.5 1.5H5L6 3H12.5V12.5H0.5Z" fill="#f0d090" stroke="#c89850" stroke-width="0.8"/><path d="M3 5.5H16L13 12.5H0Z" fill="#fdebc0" stroke="#d8a850" stroke-width="0.8"/></svg><svg style="left:82px;top:430px" width="8" height="8" viewBox="0 0 8 8"><path d="M4 0.3L7.8 7.6H0.2Z" fill="#f2c878" stroke="#e0a040" stroke-width="0.6"/><rect x="3.5" y="2.5" width="1.1" height="2.8" fill="#3a2a10"/><rect x="3.5" y="6" width="1.1" height="1" fill="#3a2a10"/></svg>
<div class="t" style="left:102px;top:421px;color:#d2d2d2;letter-spacing:-0.150px">src</div>
<svg style="left:70px;top:445px" width="6" height="10" viewBox="0 0 6 10"><path d="M0.8 0.8L5 5L0.8 9.2" fill="none" stroke="#8a8a8a" stroke-width="1.4"/></svg>
<svg style="left:82px;top:442px" width="16" height="13" viewBox="0 0 16 13"><path d="M0.5 1.5H5L6 3H12.5V12.5H0.5Z" fill="#f0d090" stroke="#c89850" stroke-width="0.8"/><path d="M3 5.5H16L13 12.5H0Z" fill="#fdebc0" stroke="#d8a850" stroke-width="0.8"/></svg>
<div class="t" style="left:102px;top:439px;color:#d2d2d2;letter-spacing:0.180px">target</div>
<svg style="left:84px;top:459px" width="12" height="14" viewBox="0 0 12 14"><path d="M0.5 0.5H8L11.5 4V13.5H0.5Z" fill="#f4f6fa" stroke="#b8b8b8"/><text x="5.5" y="12" font-size="8" font-weight="bold" font-family="Liberation Sans" text-anchor="middle" fill="#2a5ab0">M</text></svg>
<div class="t" style="left:102px;top:457px;color:#d2d2d2;letter-spacing:0.617px">pom.xml</div>
<svg style="left:54px;top:481px" width="6" height="10" viewBox="0 0 6 10"><path d="M0.8 0.8L5 5L0.8 9.2" fill="none" stroke="#8a8a8a" stroke-width="1.4"/></svg>
<svg style="left:65px;top:476px" width="17" height="15" viewBox="0 0 17 15"><path d="M1 5H15V10H1Z" fill="#f8ecc8"/><path d="M1.5 5V13" stroke="#f4f0e8"/><path d="M1 14L5 8H16L12 14Z" fill="#a4ccf4" stroke="#2c4ca8" stroke-width="0.9"/><rect x="0" y="0" width="7.5" height="6.5" fill="#fff"/><path d="M1.2 5.6V1.3L3.75 3.8L6.3 1.3V5.6" fill="none" stroke="#1a5590" stroke-width="1.4"/><rect x="7.5" y="2" width="2.5" height="3" fill="#f0d488"/><rect x="10" y="0" width="6" height="7" fill="#fff"/><path d="M13.6 0.5V4.6A1.9 1.9 0 0 1 10.6 5.2" fill="none" stroke="#2a62b0" stroke-width="1.4"/></svg><svg style="left:65px;top:484px" width="8" height="8" viewBox="0 0 8 8"><path d="M4 0.3L7.8 7.6H0.2Z" fill="#f2c878" stroke="#e0a040" stroke-width="0.6"/><rect x="3.5" y="2.5" width="1.1" height="2.8" fill="#3a2a10"/><rect x="3.5" y="6" width="1.1" height="1" fill="#3a2a10"/></svg>
<div class="t" style="left:86px;top:475px;color:#d2d2d2;letter-spacing:0.185px">TestAutomation</div>
<svg style="left:54px;top:499px" width="6" height="10" viewBox="0 0 6 10"><path d="M0.8 0.8L5 5L0.8 9.2" fill="none" stroke="#8a8a8a" stroke-width="1.4"/></svg>
<svg style="left:65px;top:494px" width="17" height="15" viewBox="0 0 17 15"><path d="M1 5H15V10H1Z" fill="#f8ecc8"/><path d="M1.5 5V13" stroke="#f4f0e8"/><path d="M1 14L5 8H16L12 14Z" fill="#a4ccf4" stroke="#2c4ca8" stroke-width="0.9"/><rect x="0" y="0" width="7.5" height="6.5" fill="#fff"/><path d="M1.2 5.6V1.3L3.75 3.8L6.3 1.3V5.6" fill="none" stroke="#1a5590" stroke-width="1.4"/><rect x="7.5" y="2" width="2.5" height="3" fill="#f0d488"/><rect x="10" y="0" width="6" height="7" fill="#fff"/><path d="M13.6 0.5V4.6A1.9 1.9 0 0 1 10.6 5.2" fill="none" stroke="#2a62b0" stroke-width="1.4"/></svg><svg style="left:65px;top:502px" width="8" height="8" viewBox="0 0 8 8"><path d="M4 0.3L7.8 7.6H0.2Z" fill="#f2c878" stroke="#e0a040" stroke-width="0.6"/><rect x="3.5" y="2.5" width="1.1" height="2.8" fill="#3a2a10"/><rect x="3.5" y="6" width="1.1" height="1" fill="#3a2a10"/></svg>
<div class="t" style="left:86px;top:493px;color:#d2d2d2;letter-spacing:0.300px">Zo+</div>
<svg style="left:54px;top:517px" width="6" height="10" viewBox="0 0 6 10"><path d="M0.8 0.8L5 5L0.8 9.2" fill="none" stroke="#8a8a8a" stroke-width="1.4"/></svg>
<svg style="left:65px;top:512px" width="17" height="15" viewBox="0 0 17 15"><path d="M1 5H15V10H1Z" fill="#f8ecc8"/><path d="M1.5 5V13" stroke="#f4f0e8"/><path d="M1 14L5 8H16L12 14Z" fill="#a4ccf4" stroke="#2c4ca8" stroke-width="0.9"/><rect x="0" y="0" width="7.5" height="6.5" fill="#fff"/><path d="M1.2 5.6V1.3L3.75 3.8L6.3 1.3V5.6" fill="none" stroke="#1a5590" stroke-width="1.4"/><rect x="7.5" y="2" width="2.5" height="3" fill="#f0d488"/><rect x="10" y="0" width="6" height="7" fill="#fff"/><path d="M13.6 0.5V4.6A1.9 1.9 0 0 1 10.6 5.2" fill="none" stroke="#2a62b0" stroke-width="1.4"/></svg><svg style="left:65px;top:520px" width="8" height="8" viewBox="0 0 8 8"><path d="M4 0.3L7.8 7.6H0.2Z" fill="#f2c878" stroke="#e0a040" stroke-width="0.6"/><rect x="3.5" y="2.5" width="1.1" height="2.8" fill="#3a2a10"/><rect x="3.5" y="6" width="1.1" height="1" fill="#3a2a10"/></svg><div class="a" style="left:74px;top:521px;width:6px;height:6px;background:#f0c030;border:1px solid #fff"></div>
<div class="t" style="left:86px;top:511px;color:#d2d2d2;letter-spacing:0.041px"><span style="color:#a8a8a8">&gt; </span><span class="repo">ZoFinancial</span> <span class="dec">[zofinancial-qa dailytask]</span></div>
<div class="a" style="left:415px;top:72px;width:6px;height:941px;background:#545557"></div>
<div class="a" style="left:421px;top:72px;width:1475px;height:941px;background:#2f2f2f"></div>
<div class="a" style="left:590px;top:72px;width:1306px;height:24px;background:linear-gradient(#4b4c50,#444546)"></div><div class="a" style="left:590px;top:96px;width:1306px;height:1px;background:#4c4c4d"></div>
<div class="a" style="left:421px;top:72px;width:169px;height:22px;background:#2b2b2b"></div>
<div class="a" style="left:421px;top:94px;width:169px;height:3px;background:#3c6e9c"></div>
<svg style="left:428px;top:77px" width="11" height="14" viewBox="0 0 11 14"><path d="M0.5 0.5H7L10.5 4V13.5H0.5Z" fill="#f4f6fa" stroke="#d8c890"/><path d="M6 3V9A2.3 2.3 0 0 1 2 9.5" fill="none" stroke="#2858a8" stroke-width="1.8"/></svg>
<div class="t" style="left:444px;top:76px;color:#f0f0f0;font-size:11.2px">TestRunnerTestNG.java</div>
<svg style="left:572px;top:80px" width="10" height="10" viewBox="0 0 10 10"><path d="M0.5 0.5L9.5 9.5M9.5 0.5L0.5 9.5" stroke="#e8e8e8" stroke-width="1"/></svg>
<div class="a" style="left:1853px;top:80px;width:9px;height:3px;background:#f0f0f0"></div>
<div class="a" style="left:1876px;top:80px;width:10px;height:1px;background:#fff"></div><div class="a" style="left:1876px;top:82px;width:10px;height:7px;background:#fff"></div>
<div class="a" style="left:421px;top:229px;width:12px;height:242px;background:repeating-conic-gradient(#47809a 0 25%, #0e3546 0 50%) 0 0/2px 2px;border-top:1px solid #47809a"></div>
<div class="a" style="left:0;top:69px;width:1920px;height:3px;background:#55595c"></div>
<div class="a" style="left:464px;top:273px;width:1402px;height:22px;background:#363636"></div>
<div class="ln" style="left:413px;top:98px">1</div>
<div class="c" style="left:465px;top:98px"><span class="kw">package</span> TestRunner;</div>
<div class="ln" style="left:413px;top:120px">2</div>
<div class="c" style="left:465px;top:120px"></div>
<div class="ln" style="left:413px;top:142px">3</div>
<div class="c" style="left:465px;top:142px"></div>
<div class="ln" style="left:413px;top:164px">4</div>
<div class="c" style="left:465px;top:164px"><span class="kw">import</span> io.cucumber.testng.AbstractTestNGCucumberTests;</div>
<div class="ln" style="left:413px;top:186px">6</div>
<div class="c" style="left:465px;top:186px"></div>
<div class="ln" style="left:413px;top:208px">7</div>
<div class="c" style="left:465px;top:208px"></div>
<div class="ln" style="left:413px;top:230px">8</div>
<div class="c" style="left:465px;top:230px"><span class="an">@CucumberOptions</span>(<span class="at">features</span> <span class="op">=</span> <span class="op">{</span> <span class="st">"src/test/java/Feature"</span> <span class="op">},</span></div>
<div class="ln" style="left:413px;top:252px">9</div>
<div class="c" style="left:465px;top:252px"><span class="at">glue</span> <span class="op">=</span> <span class="op">{</span> <span class="st">"src/test/java/StepDefinations"</span> <span class="op">},</span></div>
<div class="ln" style="left:413px;top:274px">10</div>
<div class="c" style="left:465px;top:274px"><span class="at">plugin</span> <span class="op">=</span> <span class="op">{</span> <span class="st">"pretty"</span><span class="op">}</span> </div>
<div class="ln" style="left:413px;top:296px">11</div>
<div class="c" style="left:465px;top:296px">)</div>
<div class="ln" style="left:413px;top:318px">12</div>
<div class="c" style="left:465px;top:318px"></div>
<div class="ln" style="left:413px;top:340px">13</div>
<div class="c" style="left:465px;top:340px"><span class="kw">public</span> <span class="kw">class</span> <span class="cl">TestRunnerTestNG</span> <span class="kw">extends</span> <span class="cl">AbstractTestNGCucumberTests</span><span class="op">{</span></div>
<div class="ln" style="left:413px;top:362px">14</div>
<div class="c" style="left:465px;top:362px"></div>
<div class="ln" style="left:413px;top:384px">15</div>
<div class="c" style="left:465px;top:384px"></div>
<div class="ln" style="left:413px;top:406px">16</div>
<div class="c" style="left:465px;top:406px"></div>
<div class="ln" style="left:413px;top:428px">17</div>
<div class="c" style="left:465px;top:428px"></div>
<div class="ln" style="left:413px;top:450px">18</div>
<div class="c" style="left:465px;top:450px"><span class="op">}</span></div>
<div class="ln" style="left:413px;top:472px">19</div>
<div class="c" style="left:465px;top:472px"></div>
<svg style="left:453px;top:169px" width="9" height="9" viewBox="0 0 9 9"><circle cx="4.5" cy="4.5" r="4.2" fill="#bccad6"/><path d="M2 4.5H7M4.5 2V7" stroke="#15202a" stroke-width="1.3"/></svg>
<div class="a" style="left:1005px;top:166px;width:11px;height:17px;border:1px solid #7a7a7a"></div><div class="a" style="left:1008px;top:179px;width:1px;height:1px;background:#888"></div><div class="a" style="left:1012px;top:179px;width:1px;height:1px;background:#888"></div>
<div class="a" style="left:676px;top:275px;width:2px;height:19px;background:#e8e8e8"></div>
<div class="a" style="left:1866px;top:96px;width:17px;height:900px;background:#1a1a1a"></div>
<svg style="left:1870px;top:102px" width="9" height="6" viewBox="0 0 9 6"><path d="M0.8 5L4.5 1.3L8.2 5" fill="none" stroke="#d8d8d8" stroke-width="1.8"/></svg>
<svg style="left:1870px;top:984px" width="9" height="6" viewBox="0 0 9 6"><path d="M0.8 1L4.5 4.7L8.2 1" fill="none" stroke="#d8d8d8" stroke-width="1.8"/></svg>
<div class="a" style="left:1866px;top:996px;width:17px;height:17px;background:#3a3a3a"></div>
<div class="a" style="left:463px;top:996px;width:1403px;height:17px;background:#171717"></div>
<div class="a" style="left:480px;top:996px;width:1368px;height:1px;background:#050505"></div>
<svg style="left:467px;top:1000px" width="6" height="9" viewBox="0 0 6 9"><path d="M5 0.8L1.3 4.5L5 8.2" fill="none" stroke="#d8d8d8" stroke-width="1.8"/></svg>
<svg style="left:1855px;top:1000px" width="6" height="9" viewBox="0 0 6 9"><path d="M1 0.8L4.7 4.5L1 8.2" fill="none" stroke="#d8d8d8" stroke-width="1.8"/></svg>
<div class="a" style="left:1896px;top:72px;width:24px;height:944px;background:#515658"></div>
<div class="a" style="left:1901px;top:73px;width:2px;height:2px;background:#e6e6e6"></div><div class="a" style="left:1905px;top:73px;width:2px;height:2px;background:#e6e6e6"></div><div class="a" style="left:1909px;top:73px;width:2px;height:2px;background:#e6e6e6"></div><div class="a" style="left:1913px;top:73px;width:2px;height:2px;background:#e6e6e6"></div>
<svg style="left:1904px;top:83px" width="9" height="9" viewBox="0 0 9 9"><rect x="0.5" y="3.5" width="5" height="5" fill="none" stroke="#706c60"/><path d="M3.5 3.5V0.5H8.5V5.5H5.5" fill="none" stroke="#706c60"/></svg>
<div class="a" style="left:1899px;top:101px;font-family:'Liberation Sans';font-size:10px;line-height:14px;color:#2a78b8;letter-spacing:-0.3px">(x)=</div>
<svg style="left:1901px;top:126px" width="14" height="12" viewBox="0 0 14 12"><circle cx="3.5" cy="3" r="2.8" fill="#5aa2e0" stroke="#2a70c0" stroke-width="0.7"/><circle cx="10" cy="8" r="2.8" fill="#5aa2e0" stroke="#2a70c0" stroke-width="0.7"/></svg>
<svg style="left:1900px;top:145px" width="16" height="12" viewBox="0 0 16 12"><rect x="1" y="5" width="3" height="3" fill="#fff"/><rect x="8" y="5" width="3" height="3" fill="#fff"/><path d="M0 9L5 3L11 8L16 2" fill="none" stroke="#3a8ad8" stroke-width="1.4"/><rect x="6" y="9" width="3" height="2" fill="#3a8ad8"/></svg>
<div class="a" style="left:1901px;top:166px;width:2px;height:2px;background:#e6e6e6"></div><div class="a" style="left:1905px;top:166px;width:2px;height:2px;background:#e6e6e6"></div><div class="a" style="left:1909px;top:166px;width:2px;height:2px;background:#e6e6e6"></div><div class="a" style="left:1913px;top:166px;width:2px;height:2px;background:#e6e6e6"></div>
<svg style="left:1904px;top:176px" width="9" height="9" viewBox="0 0 9 9"><rect x="0.5" y="3.5" width="5" height="5" fill="none" stroke="#706c60"/><path d="M3.5 3.5V0.5H8.5V5.5H5.5" fill="none" stroke="#706c60"/></svg>
<svg style="left:1901px;top:195px" width="14" height="12" viewBox="0 0 14 12"><rect x="0" y="0" width="14" height="11" rx="1" fill="#3467b5"/><rect x="1.5" y="1.5" width="11" height="8" fill="#f0f4fa"/><path d="M3 4H9M3 6.5H11" stroke="#2c4d80"/></svg>
<svg style="left:1900px;top:217px" width="16" height="16" viewBox="0 0 16 16"><rect x="1" y="0" width="11" height="14" fill="#e8e8f0"/><circle cx="6" cy="4.5" r="2.5" fill="#e02020"/><rect x="1" y="9" width="6" height="6" fill="#f0c030"/></svg>
<svg style="left:1902px;top:239px" width="11" height="15" viewBox="0 0 11 15"><path d="M0.5 0.5H7L10.5 4V14.5H0.5Z" fill="#f4f6fa" stroke="#d8c890"/><path d="M6 3V9A2.3 2.3 0 0 1 2 9.5" fill="none" stroke="#2858a8" stroke-width="1.8"/><circle cx="9" cy="13" r="1.5" fill="#3aa845"/></svg>
<svg style="left:1899px;top:261px" width="17" height="15" viewBox="0 0 17 15"><rect x="0" y="0" width="17" height="15" rx="3" fill="#111"/><path d="M2 13V3L7 12V2" stroke="#d02020" stroke-width="2.4" fill="none"/><path d="M15 5A3.5 4 0 1 0 15 11V8H12" stroke="#f0d020" stroke-width="2.2" fill="none"/></svg>
<div class="a" style="left:1220px;top:1014px;width:1px;height:2px;background:#e0e0e0"></div>
<div class="a" style="left:1354px;top:1014px;width:1px;height:2px;background:#e0e0e0"></div>
<div class="a" style="left:1482px;top:1014px;width:1px;height:2px;background:#e0e0e0"></div>
</body></html>
